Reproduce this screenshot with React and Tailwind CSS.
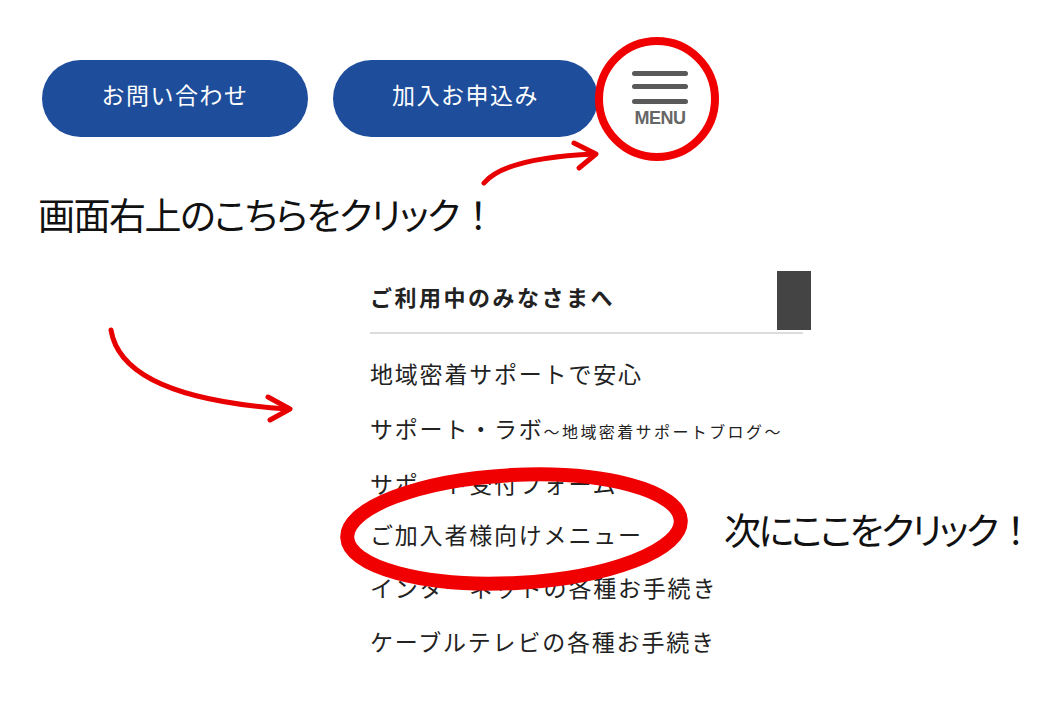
import React from 'react';

const jp = { fontFamily: '"Noto Sans CJK JP", "Noto Sans", sans-serif' };
const palt = { fontFeatureSettings: '"palt"' };

const menuItems = [
    { label: 'サポート受付フォーム', h: 'h-[51px]' },
    { label: 'ご加入者様向けメニュー', h: 'h-[53px]' },
    { label: 'インターネットの各種お手続き', h: 'h-[54px]' },
    { label: 'ケーブルテレビの各種お手続き', h: 'h-[54px]' },
];

const Annotations = () => (
    <svg
        className="absolute inset-0 pointer-events-none"
        width="1054"
        height="706"
        viewBox="0 0 1054 706"
        fill="none"
    >
        {/* circle around MENU */}
        <ellipse cx="657" cy="99" rx="58" ry="58" stroke="#f00000" strokeWidth="8" />
        {/* arrow towards MENU */}
        <path d="M484 183 Q505 158 594 154" stroke="#e80000" strokeWidth="5" strokeLinecap="round" />
        <path d="M574 143 L596 154 L579 168" stroke="#e80000" strokeWidth="5" strokeLinecap="round" strokeLinejoin="round" />
        {/* arrow towards menu list */}
        <path d="M111 330 Q122 398 288 409" stroke="#e80000" strokeWidth="5" strokeLinecap="round" />
        <path d="M268 397 L290 409 L270 420" stroke="#e80000" strokeWidth="5" strokeLinecap="round" strokeLinejoin="round" />
        {/* circle around the subscriber menu */}
        <ellipse cx="514" cy="529" rx="167" ry="54" transform="rotate(-3 514 529)" stroke="#f00000" strokeWidth="14" />
    </svg>
);

const App = () => {
    return (
        <div className="relative w-[1054px] h-[706px] bg-white overflow-hidden" style={jp}>
            {/* Header buttons */}
            <div className="flex items-center pt-[60px] pl-[42px]">
                <button className="w-[266px] h-[77px] pb-[8px] rounded-full bg-[#1e4e9b] text-white text-[23px] tracking-[1.5px] flex items-center justify-center">
                    お問い合わせ
                </button>
                <button className="ml-[25px] w-[265px] h-[77px] pb-[8px] rounded-full bg-[#1e4e9b] text-white text-[23px] tracking-[1.5px] flex items-center justify-center">
                    加入お申込み
                </button>
                <div className="ml-[34px] w-[56px] flex flex-col items-center">
                    <span className="w-[56px] h-[5px] rounded-full bg-[#5a5a5a]" />
                    <span className="mt-[8px] w-[56px] h-[5px] rounded-full bg-[#5a5a5a]" />
                    <span className="mt-[10px] w-[56px] h-[5px] rounded-full bg-[#5a5a5a]" />
                    <span
                        className="mt-[5px] text-[18px] leading-[18px] font-bold text-[#666] tracking-[-0.5px]"
                        style={{ fontFamily: '"Liberation Sans", sans-serif' }}
                    >
                        MENU
                    </span>
                </div>
            </div>

            {/* Instruction 1 */}
            <p className="mt-[55px] ml-[38px] text-[37px] leading-[44px] text-[#111] tracking-[-1.5px]" style={palt}>
                画面右上のこちらをクリック<span className="ml-[10px]">！</span>
            </p>

            {/* Menu panel */}
            <div className="mt-[35px] ml-[370px] w-[441px]">
                <div className="flex items-start justify-between">
                    <h3 className="pt-[10px] text-[22px] leading-[30px] font-bold text-[#222] tracking-[2.5px]">
                        ご利用中のみなさまへ
                    </h3>
                    <div className="w-[34px] h-[59px] bg-[#444]" />
                </div>
                <div className="mt-[2px] w-[433px] h-[2px] bg-[#dcdcdc]" />

                <ul className="mt-[24px] text-[23px] leading-[30px] text-[#222] tracking-[1.8px]">
                    <li className="h-[55px]">地域密着サポートで安心</li>
                    <li className="h-[55px]">
                        サポート・ラボ
                        <span className="text-[16px] tracking-[2.4px]">～地域密着サポートブログ～</span>
                    </li>
                    {menuItems.map((item) => (
                        <li key={item.label} className={item.h}>{item.label}</li>
                    ))}
                </ul>
            </div>

            {/* Instruction 2 */}
            <p className="absolute left-[724px] top-[507px] text-[37px] leading-[44px] text-[#111] tracking-[-2.6px]" style={palt}>
                次にここをクリック<span className="ml-[10px]">！</span>
            </p>

            <Annotations />
        </div>
    );
};

export default App;
